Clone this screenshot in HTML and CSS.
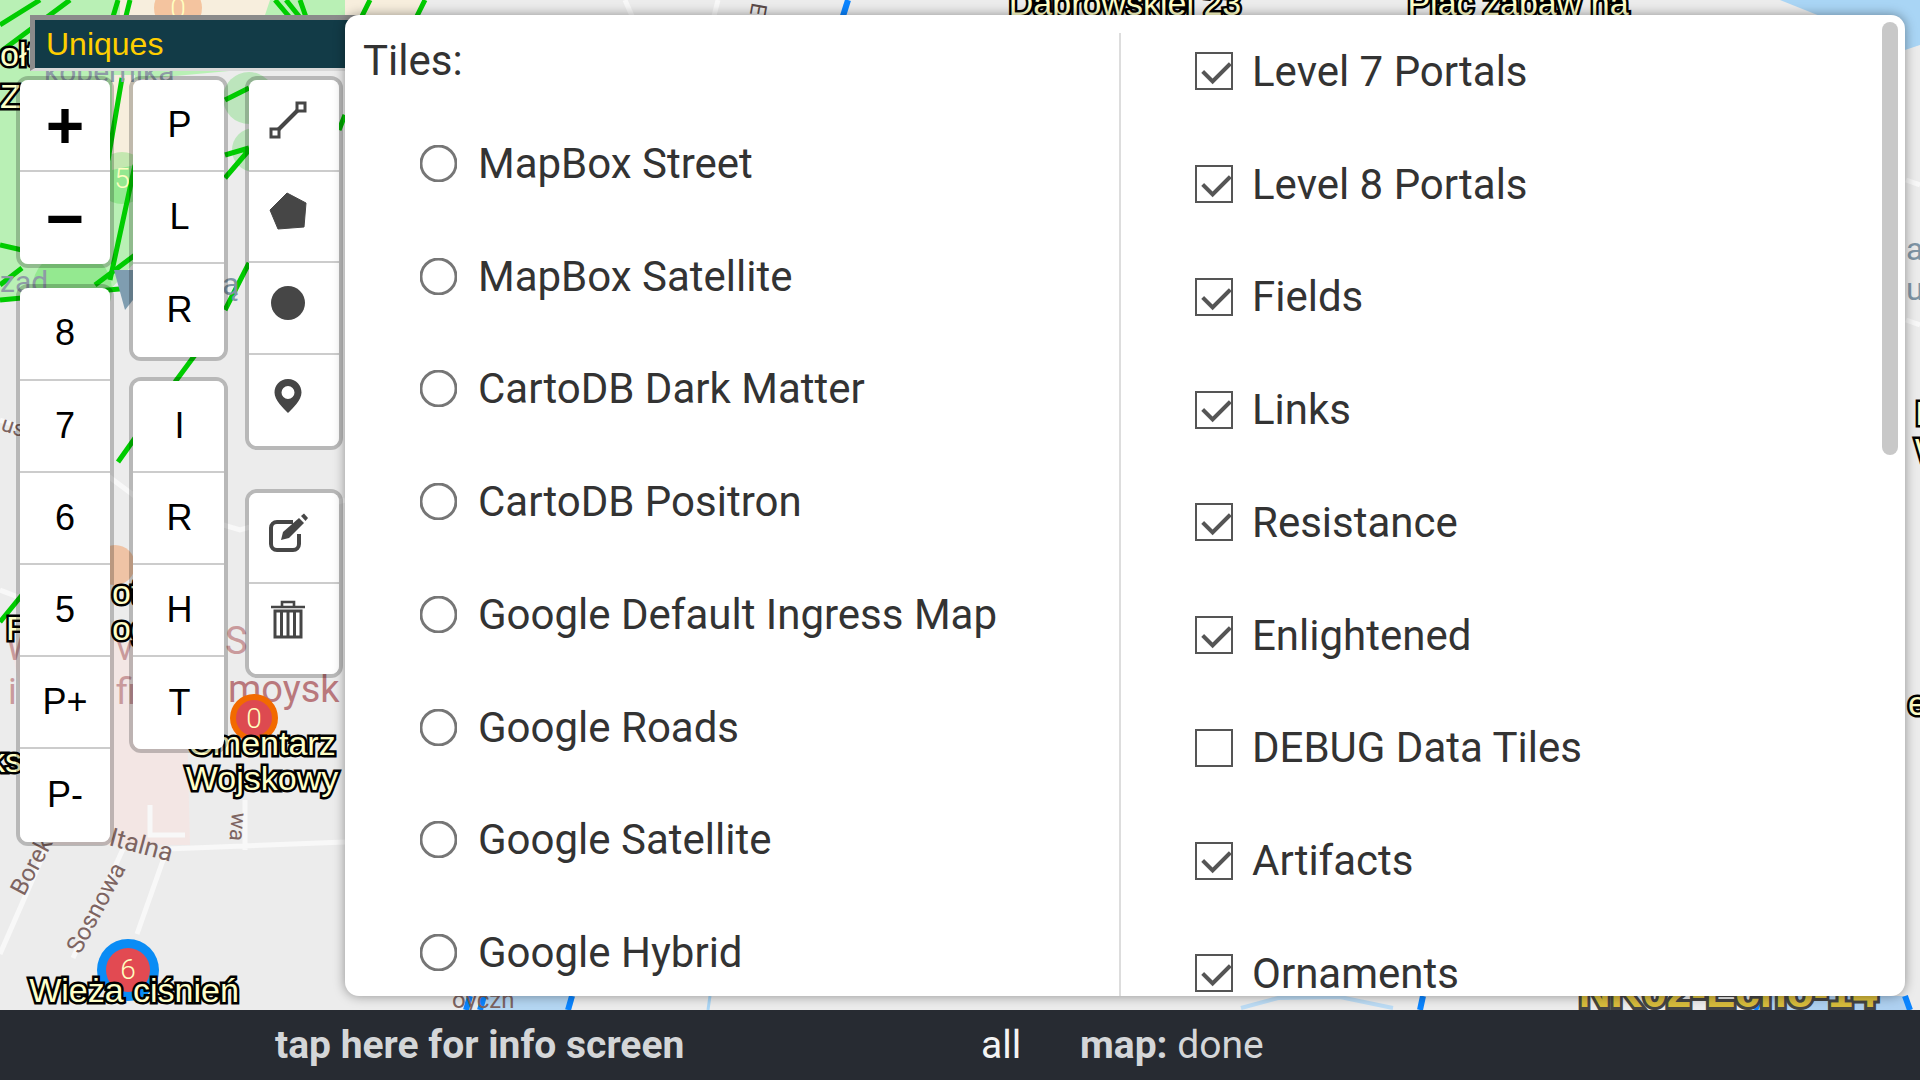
FILE: index.html
```html
<!DOCTYPE html>
<html lang="en">
<head>
    <meta charset="UTF-8">
    <title>IITC Mobile - Layers</title>
    <link rel="stylesheet" href="styles.css">
</head>
<body>
    <div class="map">
        <!-- map tiles and portals, a free canvas -->
        <svg class="map-canvas" width="1920" height="1010" viewBox="0 0 1920 1010">
            <rect width="1920" height="1010" fill="#ececec"/>
            <polygon points="0,0 345,0 345,16 330,60 240,70 132,80 135,262 110,290 0,300" fill="#b9f0b5"/>
            <polygon points="120,0 270,0 260,30 120,30" fill="#f7eedd"/>
            <polygon points="345,0 420,0 420,16 345,16" fill="#f7eedd"/>
            <polygon points="112,75 135,75 135,165 112,170" fill="#f7eedd"/>
            <polygon points="1780,0 1920,0 1920,45 1905,50" fill="#a9d5f5"/>
            <polygon points="1755,1010 1762,996 1905,996 1912,1010" fill="#aed0f0"/>
            <polygon points="483,1010 487,996 575,996 571,1010" fill="#b4d6f2"/>
            <polygon points="10,640 185,640 190,845 50,845" fill="#f3e6e4"/>

            <g fill="none" stroke="#f8f8f8" stroke-width="5">
                <path d="M0 420 L60 440 L140 500 L240 530 L345 500"/>
                <path d="M0 590 L130 640"/>
                <path d="M0 954 L45 851 M73 958 L123 849 M137 934 L167 849"/>
                <path d="M167 849 L345 842 M245 800 L245 850 M150 805 L150 835 L185 835"/>
                <path d="M625 0 L632 16 M718 0 L714 16 M1906 180 L1920 185 M1906 320 L1920 325"/>
            </g>

            <g fill="none" stroke="#00cc00" stroke-width="5">
                <path d="M0 25 L40 0 M0 52 L70 0 M118 0 L112 20 M130 0 L125 20"/>
                <path d="M275 0 L292 20 M286 0 L302 20 M300 0 L307 20"/>
                <path d="M370 0 L362 16 M425 0 L417 16"/>
                <path d="M122 78 L108 160 M135 165 L110 280"/>
                <path d="M135 255 L95 285 M0 245 L22 250 M22 268 L0 285 M0 300 L130 288"/>
                <path d="M225 100 L249 88 M225 155 L249 148 M225 178 L249 150 M225 310 L249 263"/>
                <path d="M195 355 L175 382 M135 438 L118 462 M0 622 L22 595 M339 130 L345 115"/>
            </g>
            <g fill="#00cc00" opacity="0.2">
                <circle cx="122" cy="178" r="26"/>
                <circle cx="249" cy="98" r="26"/>
                <circle cx="254" cy="150" r="22"/>
                <circle cx="72" cy="290" r="40"/>
            </g>

            <g fill="none" stroke="#0a84ff" stroke-width="6">
                <path d="M848 0 L843 16"/>
                <path d="M466 1010 L470 996 M480 1010 L484 996 M568 1010 L572 996"/>
                <path d="M1420 1010 L1423 996 M1755 1010 L1761 996 M1905 996 L1910 1010"/>
            </g>
            <path d="M710 996 L708 1010" fill="none" stroke="#a9d5f5" stroke-width="3"/>
            <path d="M1241 1008 L1278 998 L1340 997 L1393 1008" fill="none" stroke="#bcdcf5" stroke-width="4"/>
            <path d="M114 270 L133 270 L133 300 L125 310 Z" fill="#7f9db0"/>

            <g class="map-text">
                <text x="228" y="702" font-size="38" fill="#b9787c">moysk</text>
                <text x="225" y="654" font-size="38" fill="#c99a9c">S</text>
                <text x="8" y="704" font-size="36" fill="#c99a9c">i</text>
                <text x="116" y="704" font-size="36" fill="#c99a9c">fi</text>
                <text x="6" y="660" font-size="36" fill="#c99a9c">W</text>
                <text x="116" y="660" font-size="36" fill="#c99a9c">v</text>
                <text x="108" y="845" font-size="26" fill="#7d6461" transform="rotate(15 108 845)">Italna</text>
                <text x="24" y="897" font-size="24" fill="#7d6461" transform="rotate(-62 24 897)">Borek</text>
                <text x="80" y="955" font-size="24" fill="#7d6461" transform="rotate(-62 80 955)">Sosnowa</text>
                <text x="232" y="812" font-size="22" fill="#7d6461" transform="rotate(95 232 812)">wa</text>
                <text x="0" y="430" font-size="22" fill="#7d6461" transform="rotate(18 0 430)">us</text>
                <text x="222" y="295" font-size="32" fill="#7f95a5">ą</text>
                <text x="0" y="292" font-size="30" fill="#8e9ba6">zad</text>
                <text x="44" y="82" font-size="30" fill="#8e9ba6">kopernika</text>
                <text x="752" y="2" font-size="22" fill="#5a4a48" transform="rotate(100 752 2)">E</text>
                <text x="452" y="1008" font-size="24" fill="#7d6461">oyczn</text>
                <text x="1906" y="260" font-size="32" fill="#7f95a5">at</text>
                <text x="1906" y="300" font-size="32" fill="#7f95a5">u</text>
            </g>

            <g class="portal">
                <circle cx="178" cy="8" r="24" fill="#f2a36b" opacity="0.55"/>
                <circle cx="115" cy="565" r="20" fill="#f2a36b" opacity="0.55"/>
                <circle cx="254" cy="718" r="24" fill="#f26a00"/>
                <circle cx="254" cy="718" r="18" fill="#dd4a50"/>
                <circle cx="128" cy="970" r="31" fill="#0a8cf5"/>
                <circle cx="128" cy="970" r="22" fill="#e24a52"/>
                <text x="178" y="18" class="portal-num">0</text>
                <text x="122" y="188" class="portal-num">5</text>
                <text x="254" y="728" class="portal-num">0</text>
                <text x="128" y="979" class="portal-num">6</text>
            </g>

            <g class="portal-label">
                <text x="262" y="755" text-anchor="middle">Cmentarz</text>
                <text x="262" y="790" text-anchor="middle">Wojskowy</text>
                <text x="134" y="1002" text-anchor="middle">Wieża ciśnień</text>
                <text x="1125" y="15" text-anchor="middle">Dąbrowskiej 23</text>
                <text x="1518" y="15" text-anchor="middle">Plac zabaw na</text>
                <text x="0" y="66">ołt</text>
                <text x="0" y="108">Z</text>
                <text x="112" y="604">ot</text>
                <text x="112" y="640">og</text>
                <text x="6" y="640">F</text>
                <text x="-12" y="772">ks</text>
                <text x="1915" y="425">I</text>
                <text x="1915" y="462">W</text>
                <text x="1908" y="715">ej</text>
            </g>
            <text x="1728" y="1007" text-anchor="middle" class="portal-label-enl">NK02-Echo-14</text>
        </svg>

        <div class="layer-chooser">Uniques</div>

        <div class="toolbars">
            <div class="tool-col">
                <div class="bar">
                    <div class="bar-btn zoom-btn">+</div>
                    <div class="bar-btn zoom-btn">−</div>
                </div>
                <div class="bar">
                    <div class="bar-btn">8</div>
                    <div class="bar-btn">7</div>
                    <div class="bar-btn">6</div>
                    <div class="bar-btn">5</div>
                    <div class="bar-btn">P+</div>
                    <div class="bar-btn">P-</div>
                </div>
            </div>
            <div class="tool-col filter-col">
                <div class="bar">
                    <div class="bar-btn">P</div>
                    <div class="bar-btn">L</div>
                    <div class="bar-btn">R</div>
                </div>
                <div class="bar">
                    <div class="bar-btn">I</div>
                    <div class="bar-btn">R</div>
                    <div class="bar-btn">H</div>
                    <div class="bar-btn">T</div>
                </div>
            </div>
            <div class="tool-col draw-col">
                <div class="bar">
                    <div class="bar-btn icon-btn">
                        <svg width="40" height="40" viewBox="0 0 40 40"><path d="M7 33 L33 7" stroke="#464646" stroke-width="4"/><rect x="3" y="29" width="8" height="8" fill="#fff" stroke="#464646" stroke-width="3"/><rect x="29" y="3" width="8" height="8" fill="#fff" stroke="#464646" stroke-width="3"/></svg>
                    </div>
                    <div class="bar-btn icon-btn">
                        <svg width="40" height="40" viewBox="0 0 40 40"><polygon points="19,1 38,11 36,35 10,37 2,18" fill="#464646" stroke="#464646" stroke-linejoin="round"/></svg>
                    </div>
                    <div class="bar-btn icon-btn">
                        <svg width="40" height="40" viewBox="0 0 40 40"><circle cx="20" cy="20" r="17" fill="#464646"/></svg>
                    </div>
                    <div class="bar-btn icon-btn">
                        <svg width="40" height="40" viewBox="0 0 40 40"><path fill-rule="evenodd" d="M20 3 C11.5 3 6.5 9.5 6.5 16.5 C6.5 24 15 32 20 37 C25 32 33.5 24 33.5 16.5 C33.5 9.5 28.5 3 20 3 Z M20 10 A6.5 6.5 0 1 1 20 23 A6.5 6.5 0 1 1 20 10 Z" fill="#464646"/></svg>
                    </div>
                </div>
                <div class="bar edit-bar">
                    <div class="bar-btn icon-btn">
                        <svg width="40" height="40" viewBox="0 0 40 40"><path d="M25 9 H9 A6 6 0 0 0 3 15 V31 A6 6 0 0 0 9 37 H25 A6 6 0 0 0 31 31 V21" fill="none" stroke="#464646" stroke-width="4"/><path d="M13 27 L15 19 L31 5 L36 10 L21 25 Z" fill="#464646"/><path d="M33 3 L36 0.5 L40 5 L37.5 8 Z" fill="#464646"/></svg>
                    </div>
                    <div class="bar-btn icon-btn trash-btn">
                        <svg width="40" height="40" viewBox="0 0 40 40"><path d="M3 8 H37 M14 8 V3 H26 V8" fill="none" stroke="#464646" stroke-width="2.6"/><path d="M7 12 H33 V38 H7 Z" fill="none" stroke="#464646" stroke-width="3"/><path d="M13.5 13 V37 M20 13 V37 M26.5 13 V37" stroke="#464646" stroke-width="3"/></svg>
                    </div>
                </div>
            </div>
        </div>

        <div class="layers-panel">
            <div class="layers-base">
                <div class="layers-title">Tiles:</div>
                <label class="layer-row"><input type="radio" name="base"><span>MapBox Street</span></label>
                <label class="layer-row"><input type="radio" name="base"><span>MapBox Satellite</span></label>
                <label class="layer-row"><input type="radio" name="base"><span>CartoDB Dark Matter</span></label>
                <label class="layer-row"><input type="radio" name="base"><span>CartoDB Positron</span></label>
                <label class="layer-row"><input type="radio" name="base"><span>Google Default Ingress Map</span></label>
                <label class="layer-row"><input type="radio" name="base"><span>Google Roads</span></label>
                <label class="layer-row"><input type="radio" name="base"><span>Google Satellite</span></label>
                <label class="layer-row"><input type="radio" name="base"><span>Google Hybrid</span></label>
            </div>
            <div class="layers-overlay">
                <label class="layer-row"><input type="checkbox" checked><span>Level 7 Portals</span></label>
                <label class="layer-row"><input type="checkbox" checked><span>Level 8 Portals</span></label>
                <label class="layer-row"><input type="checkbox" checked><span>Fields</span></label>
                <label class="layer-row"><input type="checkbox" checked><span>Links</span></label>
                <label class="layer-row"><input type="checkbox" checked><span>Resistance</span></label>
                <label class="layer-row"><input type="checkbox" checked><span>Enlightened</span></label>
                <label class="layer-row"><input type="checkbox"><span>DEBUG Data Tiles</span></label>
                <label class="layer-row"><input type="checkbox" checked><span>Artifacts</span></label>
                <label class="layer-row"><input type="checkbox" checked><span>Ornaments</span></label>
            </div>
            <div class="scroll-thumb"></div>
        </div>
    </div>

    <div class="statusbar">
        <div class="status-info">tap here for info screen</div>
        <div class="status-portals">all</div>
        <div class="status-map"><b>map:</b> done</div>
    </div>
</body>
</html>
```

FILE: styles.css
```css
/* General Styling */
* {
    margin: 0;
    padding: 0;
    box-sizing: border-box;
}

body {
    width: 1920px;
    height: 1080px;
    overflow: hidden;
    display: flex;
    flex-direction: column;
    font-family: 'Roboto', sans-serif;
    background: #ececec;
}

/* Map */
.map {
    position: relative;
    flex: 1;
    overflow: hidden;
}

.map-canvas {
    position: absolute;
    top: 0;
    left: 0;
}

.map-text text {
    font-family: 'Roboto', sans-serif;
}

.portal-num {
    font-family: 'Roboto', sans-serif;
    font-size: 28px;
    font-weight: 300;
    fill: #ffffc0;
    text-anchor: middle;
}

.portal-label text {
    font-family: 'Liberation Sans', sans-serif;
    font-size: 34px;
    fill: #ffffc8;
    stroke: #000;
    stroke-width: 5px;
    paint-order: stroke;
}

.portal-label-enl {
    font-family: 'Liberation Sans', sans-serif;
    font-size: 44px;
    font-weight: bold;
    fill: #d8bc3c;
    stroke: #444;
    stroke-width: 6px;
    paint-order: stroke;
}

/* Layer chooser */
.layer-chooser {
    position: absolute;
    top: 15px;
    left: 30px;
    width: 330px;
    height: 56px;
    padding-left: 11px;
    line-height: 48px;
    font-family: 'Liberation Sans', sans-serif;
    font-size: 32px;
    color: #ffce00;
    background: #123b47;
    border-style: solid;
    border-width: 5px 0 3px 5px;
    border-color: #8b8b8b #ccc #d8d8d8 #8b8b8b;
}

/* Toolbars */
.toolbars {
    position: absolute;
    top: 76px;
    left: 16px;
    display: flex;
    gap: 15px;
}

.tool-col {
    display: flex;
    flex-direction: column;
    gap: 16px;
    width: 98px;
}

.filter-col {
    width: 99px;
}

.filter-col .bar-btn {
    padding-left: 2px;
}

.draw-col {
    gap: 39px;
    margin-left: 2px;
}

.bar {
    border: 4px solid rgba(0, 0, 0, 0.22);
    border-radius: 12px;
    background-clip: padding-box;
    overflow: hidden;
}

.bar-btn {
    height: 92.2px;
    display: flex;
    align-items: center;
    justify-content: center;
    background: white;
    border-bottom: 2px solid #ccc;
    font-family: 'Liberation Sans', sans-serif;
    font-size: 36px;
    color: black;
}

.bar-btn:last-child {
    border-bottom: none;
}

.zoom-btn {
    padding-top: 10px;
    font-family: 'Liberation Mono', monospace;
    font-size: 66px;
    font-weight: bold;
}

.draw-col .bar-btn {
    height: 91.5px;
}

.draw-col .edit-bar .bar-btn {
    height: 90.5px;
}

.icon-btn {
    padding: 0 12px 9px 0;
}

.trash-btn {
    padding-bottom: 20px;
}

/* Layers panel */
.layers-panel {
    position: absolute;
    top: 15px;
    left: 345px;
    width: 1560px;
    height: 981px;
    display: flex;
    overflow: hidden;
    background: white;
    border-radius: 14px;
    box-shadow: 0 0 12px rgba(0, 0, 0, 0.4);
    color: #333;
    font-size: 42px;
}

.layers-base {
    width: 774px;
    padding: 0 0 0 18px;
}

.layers-title {
    height: 92px;
    padding-top: 18px;
    line-height: 56px;
}

.layers-base .layer-row {
    padding-left: 56px;
}

.layers-overlay {
    flex: 1;
    margin-top: 18px;
    padding: 0 0 0 74px;
    border-left: 2px solid #ddd;
}

.layers-overlay .layer-row:first-child {
    margin-top: -18px;
}

.layer-row {
    display: flex;
    align-items: center;
    height: 112.75px;
    gap: 19px;
}

.layers-base .layer-row {
    gap: 21px;
}

/* native radio, scaled up as the app does */
.layer-row input[type="radio"] {
    flex: none;
    width: 13px;
    height: 13px;
    margin: 0 12.5px;
    transform: scale(2.92);
}

.layer-row input[type="checkbox"] {
    flex: none;
    position: relative;
    appearance: none;
    width: 38px;
    height: 38px;
    border: 2.5px solid #555;
    background: white;
}

.layer-row input[type="checkbox"]:checked::after {
    content: "";
    position: absolute;
    left: 5.6px;
    top: 6.7px;
    width: 23px;
    height: 12px;
    border-left: 4px solid #555;
    border-bottom: 4px solid #555;
    transform: rotate(-45deg);
    filter: blur(0.6px);
}

.scroll-thumb {
    position: absolute;
    top: 7px;
    right: 7px;
    width: 16px;
    height: 433px;
    border-radius: 8px;
    background: #c8c8c8;
}

/* Status bar */
.statusbar {
    display: flex;
    align-items: center;
    height: 70px;
    flex: none;
    background: #272b32;
    color: #d4d6d8;
    font-size: 39px;
}

.status-info {
    width: 981px;
    padding-left: 275px;
    font-weight: bold;
}

.status-portals {
    width: 99px;
    color: #f4f4f4;
}

.status-map b {
    font-weight: bold;
}
```
